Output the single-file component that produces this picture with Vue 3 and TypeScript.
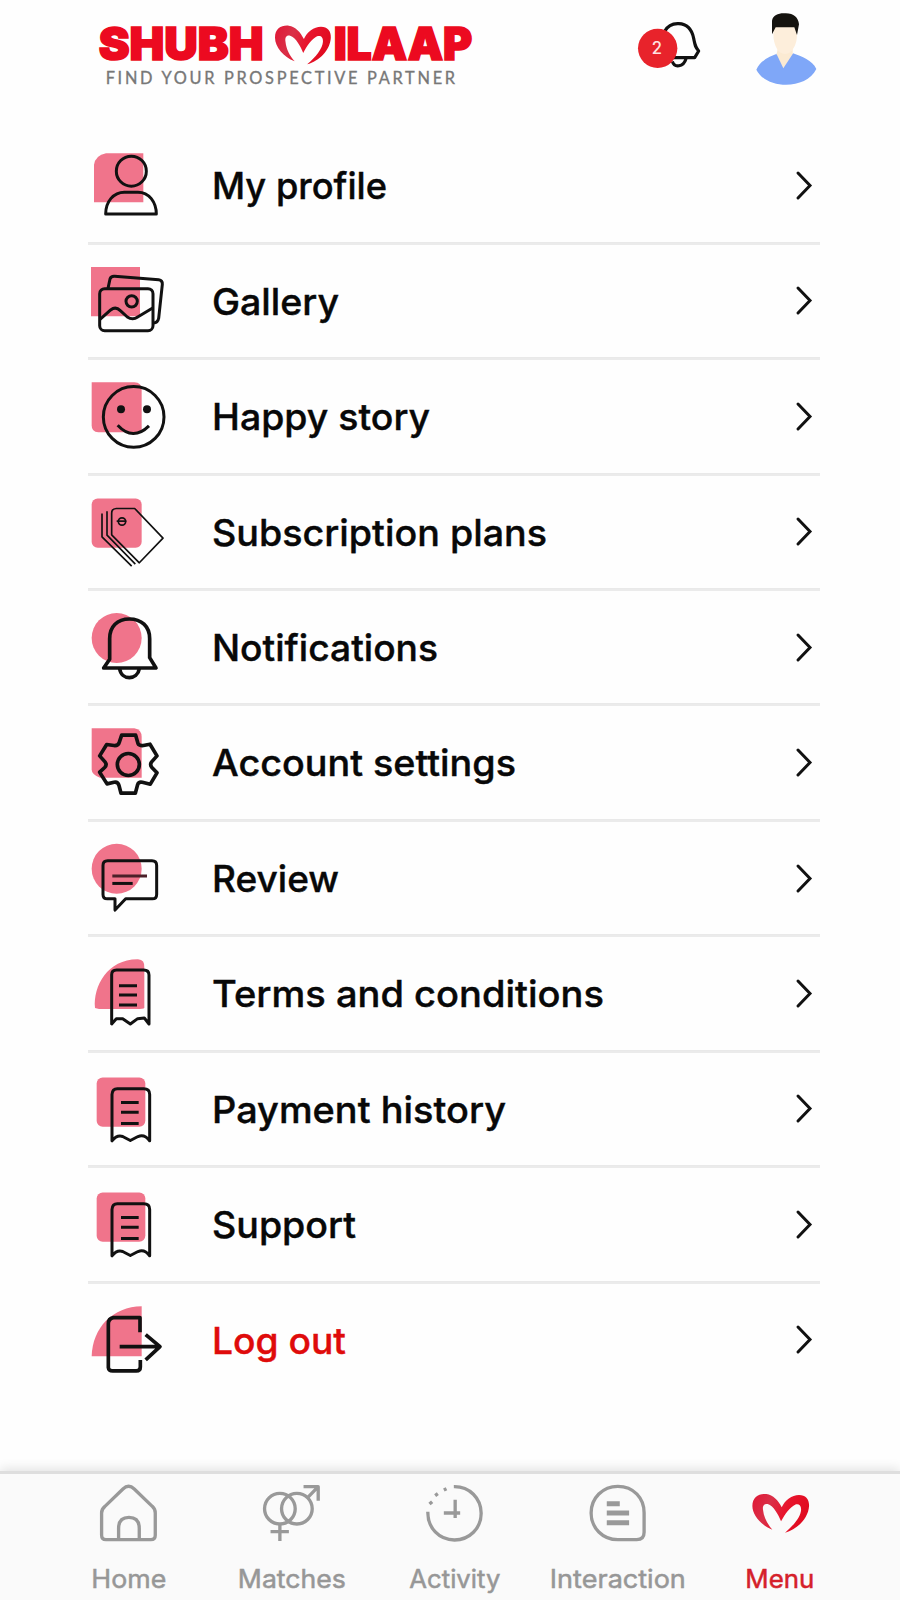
<script setup lang="ts">
interface MenuRow {
  icon: string
  label: string
  width: number
  viewY: number
  danger?: boolean
}

interface Tab {
  icon: string
  label: string
  width: number
  active?: boolean
}

const rows: MenuRow[] = [
  { icon: 'profile', label: 'My profile', width: 175, viewY: -38.4 },
  { icon: 'gallery', label: 'Gallery', width: 127, viewY: 308 },
  { icon: 'smile', label: 'Happy story', width: 218, viewY: -35.7 },
  { icon: 'tag', label: 'Subscription plans', width: 335, viewY: 310.6 },
  { icon: 'bell', label: 'Notifications', width: 226, viewY: -33 },
  { icon: 'gear', label: 'Account settings', width: 304, viewY: 313.4 },
  { icon: 'review', label: 'Review', width: 127, viewY: -30.3 },
  { icon: 'terms', label: 'Terms and conditions', width: 392, viewY: 316 },
  { icon: 'receipt', label: 'Payment history', width: 294, viewY: -27.6 },
  { icon: 'receipt', label: 'Support', width: 144, viewY: -27.6 },
  { icon: 'logout', label: 'Log out', width: 134, viewY: -24.9, danger: true },
]

const tabs: Tab[] = [
  { icon: 'home', label: 'Home', width: 75 },
  { icon: 'matches', label: 'Matches', width: 108 },
  { icon: 'activity', label: 'Activity', width: 91 },
  { icon: 'interaction', label: 'Interaction', width: 136 },
  { icon: 'menu', label: 'Menu', width: 69, active: true },
]

const heart =
  'M60 109C25 95 0 65 0 38C0 10 20 0 42 2C62 4 78 22 88 42C98 20 118 5 140 5C160 5 171 18 170 38C168 75 135 108 98 118C125 95 145 70 146 50C147 35 138 30 128 34C112 42 98 62 86 84C78 64 64 38 46 32C34 30 30 38 32 50C34 72 45 92 60 109Z'
</script>

<template>
  <div class="screen">
    <header class="header">
      <svg class="brand" viewBox="0 0 1230 270">
        <defs>
          <linearGradient id="heartFill" x1="0" y1="0" x2="1" y2="0.3">
            <stop offset="0" stop-color="#e11634" />
            <stop offset="0.35" stop-color="#d93048" />
            <stop offset="0.65" stop-color="#e8142c" />
            <stop offset="1" stop-color="#e00b20" />
          </linearGradient>
        </defs>
        <text class="brand-name" x="56" y="149" textLength="495" lengthAdjust="spacingAndGlyphs">SHUBH</text>
        <path :d="heart" transform="translate(585 45) scale(0.985 1)" fill="url(#heartFill)" />
        <text class="brand-name" x="761" y="149" textLength="416" lengthAdjust="spacingAndGlyphs">ILAAP</text>
        <text class="tagline" x="77" y="221" textLength="1048">FIND YOUR PROSPECTIVE PARTNER</text>
      </svg>
      <svg class="account" viewBox="0 0 660 300">
        <g fill="none" stroke="#111" stroke-width="9.5" stroke-linejoin="round">
          <path d="M134 94C144 76 158 70 176 71C204 72 216 90 221 115C225 135 225 140 236 153L224 173H160" />
          <path d="M157 184C163 204 190 202 198 176" />
        </g>
        <circle cx="113" cy="145" r="59" fill="#e8232b" />
        <text class="badge" x="111" y="163" text-anchor="middle">2</text>
        <path d="M409 209C422 180 450 170 474 160L490 190L519 160C545 170 577 180 589 207C558 270 440 270 409 209Z" fill="#7fa7f8" />
        <path d="M474 140H518V162L490 205L470 163Z" fill="#fbead2" />
        <path d="M460 75H531V105C531 134 516 162 495 162C474 162 461 135 460 105Z" fill="#fdeedb" />
        <path d="M456 103V62C459 45 476 39 495 40C520 39 535 52 537 73L531 105L523 82H467Z" fill="#15130f" />
      </svg>
    </header>

    <main class="menu">
      <div v-for="row in rows" :key="row.label" class="row">
        <svg class="row-icon" :viewBox="`24 ${row.viewY} 240 346.35`">
          <template v-if="row.icon === 'profile'">
            <path class="tint" d="M42 75Q46 46 78 40H190V187H42Z" />
            <g class="line">
              <circle cx="154" cy="94" r="45" />
              <path d="M77 223C77 185 101 157 133 157H174C207 157 229 187 229 223Z" />
            </g>
          </template>
          <template v-else-if="row.icon === 'gallery'">
            <path class="tint" d="M33 380H180V528H33Z" />
            <g class="line">
              <path d="M84 444L90 416Q93 407 104 408L236 418Q248 420 247 432L236 534Q233 549 219 548" />
              <rect x="59" y="445" width="160" height="126" rx="15" />
              <circle cx="155" cy="483" r="17" />
              <path d="M60 537L92 509Q107 497 121 511L142 530Q158 541 173 530L218 503" />
            </g>
          </template>
          <template v-else-if="row.icon === 'smile'">
            <path class="tint" d="M35 37H163Q185 38 185 60V187H55Q35 187 35 167Z" />
            <circle cx="161" cy="141" r="91" class="line" />
            <circle cx="123" cy="118" r="12" fill="#111" />
            <circle cx="201" cy="118" r="12" fill="#111" />
            <path class="line" d="M113 166Q159 215 207 168" />
          </template>
          <template v-else-if="row.icon === 'tag'">
            <rect class="tint" x="35" y="384" width="150" height="148" rx="18" />
            <g class="line thin">
              <path d="M109 414H164L249 503L178 577L95 493V428Q95 415 109 414Z" />
              <path d="M81 422V494L166 581" />
              <path d="M66 429V499L155 587" />
              <circle cx="126" cy="453" r="11" />
              <path d="M110 452H139" />
            </g>
          </template>
          <template v-else-if="row.icon === 'bell'">
            <circle class="tint" cx="110" cy="114" r="75" />
            <g class="line heavy">
              <path d="M71 204L89 178V116C89 79 112 57 148 57C184 57 209 79 209 116V173L228 204Z" />
              <path d="M119 206C124 242 172 242 178 206" />
            </g>
          </template>
          <template v-else-if="row.icon === 'gear'">
            <path class="tint" d="M35 386H163Q185 390 185 412V535H60Q35 525 35 510Z" />
            <g class="line heavy">
              <circle cx="145" cy="495" r="33" />
              <path d="M125 407H167L174 432Q177 439 190 438L210 434L231 469L215 487Q209 495 215 503L231 520L211 554L187 548Q176 546 173 555L166 581H123L117 558Q114 546 102 548L81 553L59 518L74 504Q82 496 75 487L59 469L80 435L102 438Q115 439 118 428Z" />
            </g>
          </template>
          <template v-else-if="row.icon === 'review'">
            <circle class="tint" cx="110" cy="116" r="75" />
            <g class="line">
              <path d="M83 92H216Q230 92 230 106V193Q230 206 217 206H137L105 240V206H82Q69 206 69 193V106Q69 92 83 92Z" />
              <path d="M97 138H201" stroke="#4b2029" />
              <path d="M97 160H158" />
            </g>
          </template>
          <template v-else-if="row.icon === 'terms'">
            <path class="tint" d="M45 535C39 470 83 388 174 389Q195 390 193 415V535Q190 538 171 538H57Z" />
            <g class="line">
              <path d="M95 583V435Q95 421 110 421H191Q207 421 207 436V583L193 565L173 567L151 583L128 567L109 567Z" />
              <path d="M117 468H171M117 496H171M117 526H171" />
            </g>
          </template>
          <template v-else-if="row.icon === 'receipt'">
            <rect class="tint" x="50" y="52" width="146" height="148" rx="18" />
            <g class="line">
              <path d="M96 242V103Q97 86 112 86H191Q209 86 209 103V242Q194 221 174 229L151 241L128 229Q111 223 96 242Z" />
              <path d="M123 127H176M123 156H176M123 190H176" />
            </g>
          </template>
          <template v-else>
            <path class="tint" d="M35 198C37 112 99 49 185 48V198Z" />
            <g class="line heavy">
              <path d="M180 126V82H100Q85 85 85 100V232Q86 242 98 242H169Q181 242 181 230V209" />
              <path d="M119 169H238M197 133L240 169L197 209" />
            </g>
          </template>
        </svg>
        <svg class="row-label" :class="{ danger: row.danger }">
          <text x="0" y="72.4" :textLength="row.width" lengthAdjust="spacingAndGlyphs">{{ row.label }}</text>
        </svg>
        <svg class="chevron" viewBox="0 0 16 28">
          <path d="M2 2L14 14.5L2 27" />
        </svg>
      </div>
    </main>

    <nav class="tabbar">
      <div v-for="(tab, i) in tabs" :key="tab.label" class="tab" :class="{ active: tab.active }">
        <svg class="tab-icon" :viewBox="`${142.2 + 488.16 * i} 42 488.16 234`">
          <g v-if="tab.icon === 'home'" class="glyph">
            <path d="M306 159Q306 147 316 139L370 87Q387 71 404 87L458 139Q467 147 467 159V226Q467 239 454 239H319Q306 239 306 226Z" />
            <path d="M357 239V205Q357 172 388 172Q419 172 419 205V239" />
          </g>
          <g v-else-if="tab.icon === 'matches'" class="glyph">
            <circle cx="840" cy="146" r="46" />
            <circle cx="891" cy="146" r="46" />
            <path d="M840 192V243M812 215H867M924 112L955 80M911 80H955V122" />
          </g>
          <g v-else-if="tab.icon === 'activity'" class="glyph">
            <path d="M1361 80C1408 79 1443 115 1443 160C1443 205 1408 240 1363 240C1317 240 1282 204 1283 155" />
            <path d="M1365 119V174M1331 159H1380" />
            <path d="M1288 132l8 -7M1305 107l8 -6M1331 90l8 -4" />
          </g>
          <g v-else-if="tab.icon === 'interaction'" class="glyph" transform="translate(1320 0)">
            <path d="M532 79C580 79 611 115 611 158V217Q611 239 589 239H532C487 239 452 204 452 159C452 114 487 79 532 79Z" />
            <path d="M499 131H538M499 159H566M499 188H566" class="bars" />
          </g>
          <path v-else :d="heart" transform="translate(2258 100)" fill="url(#heartFill)" />
        </svg>
        <svg class="tab-label">
          <text :x="81.86 - tab.width / 2" y="35.7" :textLength="tab.width" lengthAdjust="spacingAndGlyphs">{{ tab.label }}</text>
        </svg>
      </div>
    </nav>
  </div>
</template>

<style>
body {
  margin: 0;
  background: #fefefe;
}
</style>

<style scoped>
.screen {
  width: 900px;
  height: 1600px;
  display: flex;
  flex-direction: column;
  overflow: hidden;
  background: #fefefe;
  font-family: Inter, "Open Sans", sans-serif;
}

svg {
  display: block;
  flex: none;
}

.header {
  height: 127.2px;
  flex: none;
  box-sizing: border-box;
  padding: 0 60px 0 80px;
  display: flex;
  justify-content: space-between;
}

.brand {
  width: 410px;
  height: 90px;
  margin-top: 10px;
}

.brand-name {
  font: 900 137px Inter, sans-serif;
  fill: #ec0a20;
  stroke: #ec0a20;
  stroke-width: 5px;
}

.tagline {
  font: 400 49px Lato, sans-serif;
  fill: #777;
  stroke: #777;
  stroke-width: 1px;
}

.account {
  width: 220px;
  height: 100px;
}

.badge {
  font: 500 50px Inter, sans-serif;
  fill: #ffe2e2;
}

.menu {
  flex: 1;
  padding: 0 80px 0 88px;
}

.row {
  width: 732px;
  height: 115.45px;
  display: flex;
  align-items: center;
  background: linear-gradient(#e9e9e9, #e9e9e9) bottom / 100% 1px no-repeat;
  box-shadow: 0 2px 0 #ebebeb;
}

.row:last-child {
  background: none;
  box-shadow: none;
}

.row-icon {
  width: 80px;
  height: 115.45px;
}

.row-label {
  width: 600px;
  height: 115.45px;
  margin-left: 44px;
  margin-right: -16px;
  overflow: visible;
  font-size: 37px;
  font-weight: 500;
  fill: #080808;
  stroke: #080808;
  stroke-width: 0.4px;
}

.row-label.danger {
  fill: #df0b0b;
  stroke: #df0b0b;
}

.chevron {
  width: 16px;
  height: 28px;
  overflow: visible;
  fill: none;
  stroke: #111;
  stroke-width: 3px;
  stroke-linecap: round;
}

.tint {
  fill: #f0748b;
}

.line {
  fill: none;
  stroke: #111;
  stroke-width: 9px;
  stroke-linejoin: round;
  stroke-linecap: butt;
}

.heavy {
  stroke-width: 11px;
}

.thin {
  stroke-width: 5px;
}

.tabbar {
  height: 129px;
  flex: none;
  box-sizing: border-box;
  padding: 0 39px 0 47.4px;
  display: flex;
  background: #fafafa;
  border-top: 3px solid #dedede;
  box-shadow: 0 -2px 11px rgba(0, 0, 0, 0.12);
}

.tab {
  width: 162.72px;
  flex: none;
}

.tab-icon {
  width: 162.72px;
  height: 78px;
}

.tab-label {
  width: 162.72px;
  height: 46px;
  overflow: visible;
  font-size: 25.5px;
  font-weight: 400;
  fill: #979797;
  stroke: #979797;
  stroke-width: 0.5px;
}

.active .tab-label {
  fill: #d5202a;
  stroke: #d5202a;
}

.glyph {
  fill: none;
  stroke: #999;
  stroke-width: 10px;
  stroke-linejoin: round;
}

.bars {
  stroke-width: 15px;
}
</style>
